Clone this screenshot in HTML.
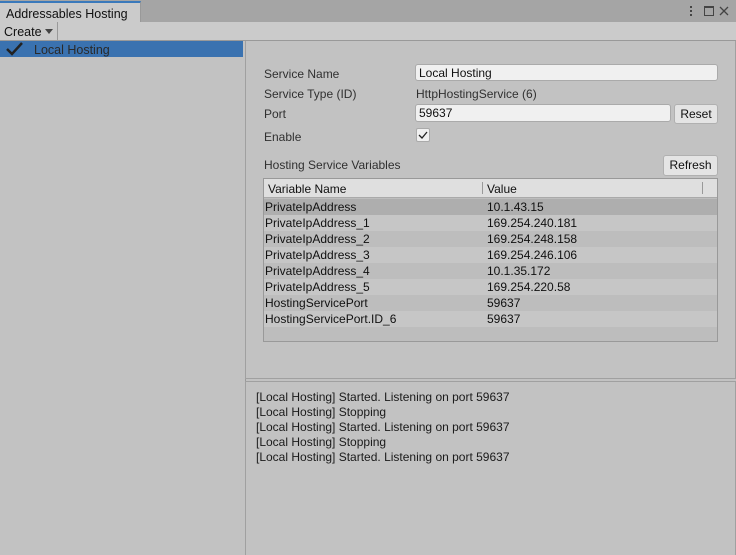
<!DOCTYPE html>
<html><head><style>
*{margin:0;padding:0;box-sizing:border-box}
body{width:736px;height:555px;background:#c2c2c2;font-family:"Liberation Sans",sans-serif;font-size:12px;color:#101010;position:relative;overflow:hidden}
.a{position:absolute;white-space:nowrap}
.lbl{color:#303030}
.row{position:absolute;left:264px;width:453px;height:16px;line-height:17px}
.row span{position:absolute;left:1px}
.row span+span{left:223px}
.btn{position:absolute;background:#e4e4e4;border:1px solid #b0b0b0;border-radius:3px;text-align:center;line-height:19px}
.field{position:absolute;background:#f0f0f0;border:1px solid #aaa;border-radius:3px;padding-left:3px;line-height:17px}
.log div{height:15px;line-height:15px}
</style></head><body>
<div class="a" style="left:0;top:0;width:736px;height:22px;background:#a5a5a5"></div>
<div class="a" style="left:0;top:1px;width:141px;height:21px;background:#cbcbcb;border-top:2px solid #3a79bb;border-right:1px solid #999;padding:4px 0 0 6px;font-size:12.5px">Addressables Hosting</div>
<svg class="a" style="left:686px;top:5px" width="50" height="12"><g fill="#444"><rect x="4" y="1" width="2" height="2"/><rect x="4" y="5" width="2" height="2"/><rect x="4" y="9" width="2" height="2"/></g><rect x="18.5" y="1.5" width="9" height="9" fill="none" stroke="#444"/><rect x="18" y="1" width="10" height="2" fill="#444"/><path d="M34 2l8 8M42 2l-8 8" stroke="#444" stroke-width="1.3"/></svg>
<div class="a" style="left:0;top:22px;width:736px;height:19px;background:#cbcbcb;border-bottom:1px solid #999"></div>
<div class="a" style="left:0;top:22px;width:58px;height:19px;border-right:1px solid #999;padding:3px 0 0 4px;font-size:12.5px">Create</div>
<svg class="a" style="left:45px;top:29px" width="8" height="5"><path d="M0 0h8l-4 5z" fill="#444"/></svg>
<div class="a" style="left:0;top:41px;width:243px;height:16px;background:#3a72b0"></div>
<svg class="a" style="left:6px;top:42px" width="18" height="14"><path d="M1 7l5 5L16 1" fill="none" stroke="#222" stroke-width="2.5"/></svg>
<div class="a" style="left:34px;top:43px;font-size:12.5px;color:#2a2a2a">Local Hosting</div>
<div class="a" style="left:245px;top:41px;width:1px;height:514px;background:#999"></div>
<div class="a" style="left:245px;top:41px;width:491px;height:338px;border:1px solid #a0a0a0;border-top:none"></div>
<div class="a lbl" style="left:264px;top:67px">Service Name</div>
<div class="field" style="left:415px;top:64px;width:303px;height:17px">Local Hosting</div>
<div class="a lbl" style="left:264px;top:87px">Service Type (ID)</div>
<div class="a lbl" style="left:416px;top:87px">HttpHostingService (6)</div>
<div class="a lbl" style="left:264px;top:107px">Port</div>
<div class="field" style="left:415px;top:104px;width:256px;height:18px">59637</div>
<div class="btn" style="left:674px;top:104px;width:44px;height:20px">Reset</div>
<div class="a lbl" style="left:264px;top:130px">Enable</div>
<div class="a" style="left:416px;top:128px;width:14px;height:14px;background:#f0f0f0;border:1px solid #aaa;border-radius:2px"></div>
<svg class="a" style="left:418px;top:131px" width="10" height="8"><path d="M1 4l3 3 5-6" fill="none" stroke="#222" stroke-width="1.3"/></svg>
<div class="a lbl" style="left:264px;top:158px">Hosting Service Variables</div>
<div class="btn" style="left:663px;top:155px;width:55px;height:21px">Refresh</div>
<div class="a" style="left:263px;top:178px;width:455px;height:164px;border:1px solid #999;background:#bdbdbd"></div>
<div class="a" style="left:264px;top:179px;width:453px;height:19px;background:#dfdfdf;border-bottom:1px solid #aaa"></div>
<div class="a" style="left:268px;top:182px">Variable Name</div>
<div class="a" style="left:482px;top:182px;width:1px;height:12px;background:#999"></div>
<div class="a" style="left:487px;top:182px">Value</div>
<div class="a" style="left:702px;top:182px;width:1px;height:12px;background:#999"></div>
<div class="row" style="top:199px;background:#aeaeae"><span>PrivateIpAddress</span><span>10.1.43.15</span></div>
<div class="row" style="top:215px;background:#c6c6c6"><span>PrivateIpAddress_1</span><span>169.254.240.181</span></div>
<div class="row" style="top:231px;background:#bdbdbd"><span>PrivateIpAddress_2</span><span>169.254.248.158</span></div>
<div class="row" style="top:247px;background:#c6c6c6"><span>PrivateIpAddress_3</span><span>169.254.246.106</span></div>
<div class="row" style="top:263px;background:#bdbdbd"><span>PrivateIpAddress_4</span><span>10.1.35.172</span></div>
<div class="row" style="top:279px;background:#c6c6c6"><span>PrivateIpAddress_5</span><span>169.254.220.58</span></div>
<div class="row" style="top:295px;background:#bdbdbd"><span>HostingServicePort</span><span>59637</span></div>
<div class="row" style="top:311px;background:#c6c6c6"><span>HostingServicePort.ID_6</span><span>59637</span></div>
<div class="row" style="top:327px;height:14px;background:#bdbdbd"></div>
<div class="a" style="left:245px;top:381px;width:491px;height:174px;border:1px solid #a0a0a0;border-bottom:none"></div>
<div class="a log" style="left:256px;top:390px;color:#1a1a1a">
<div>[Local Hosting] Started. Listening on port 59637</div>
<div>[Local Hosting] Stopping</div>
<div>[Local Hosting] Started. Listening on port 59637</div>
<div>[Local Hosting] Stopping</div>
<div>[Local Hosting] Started. Listening on port 59637</div>
</div>
</body></html>
